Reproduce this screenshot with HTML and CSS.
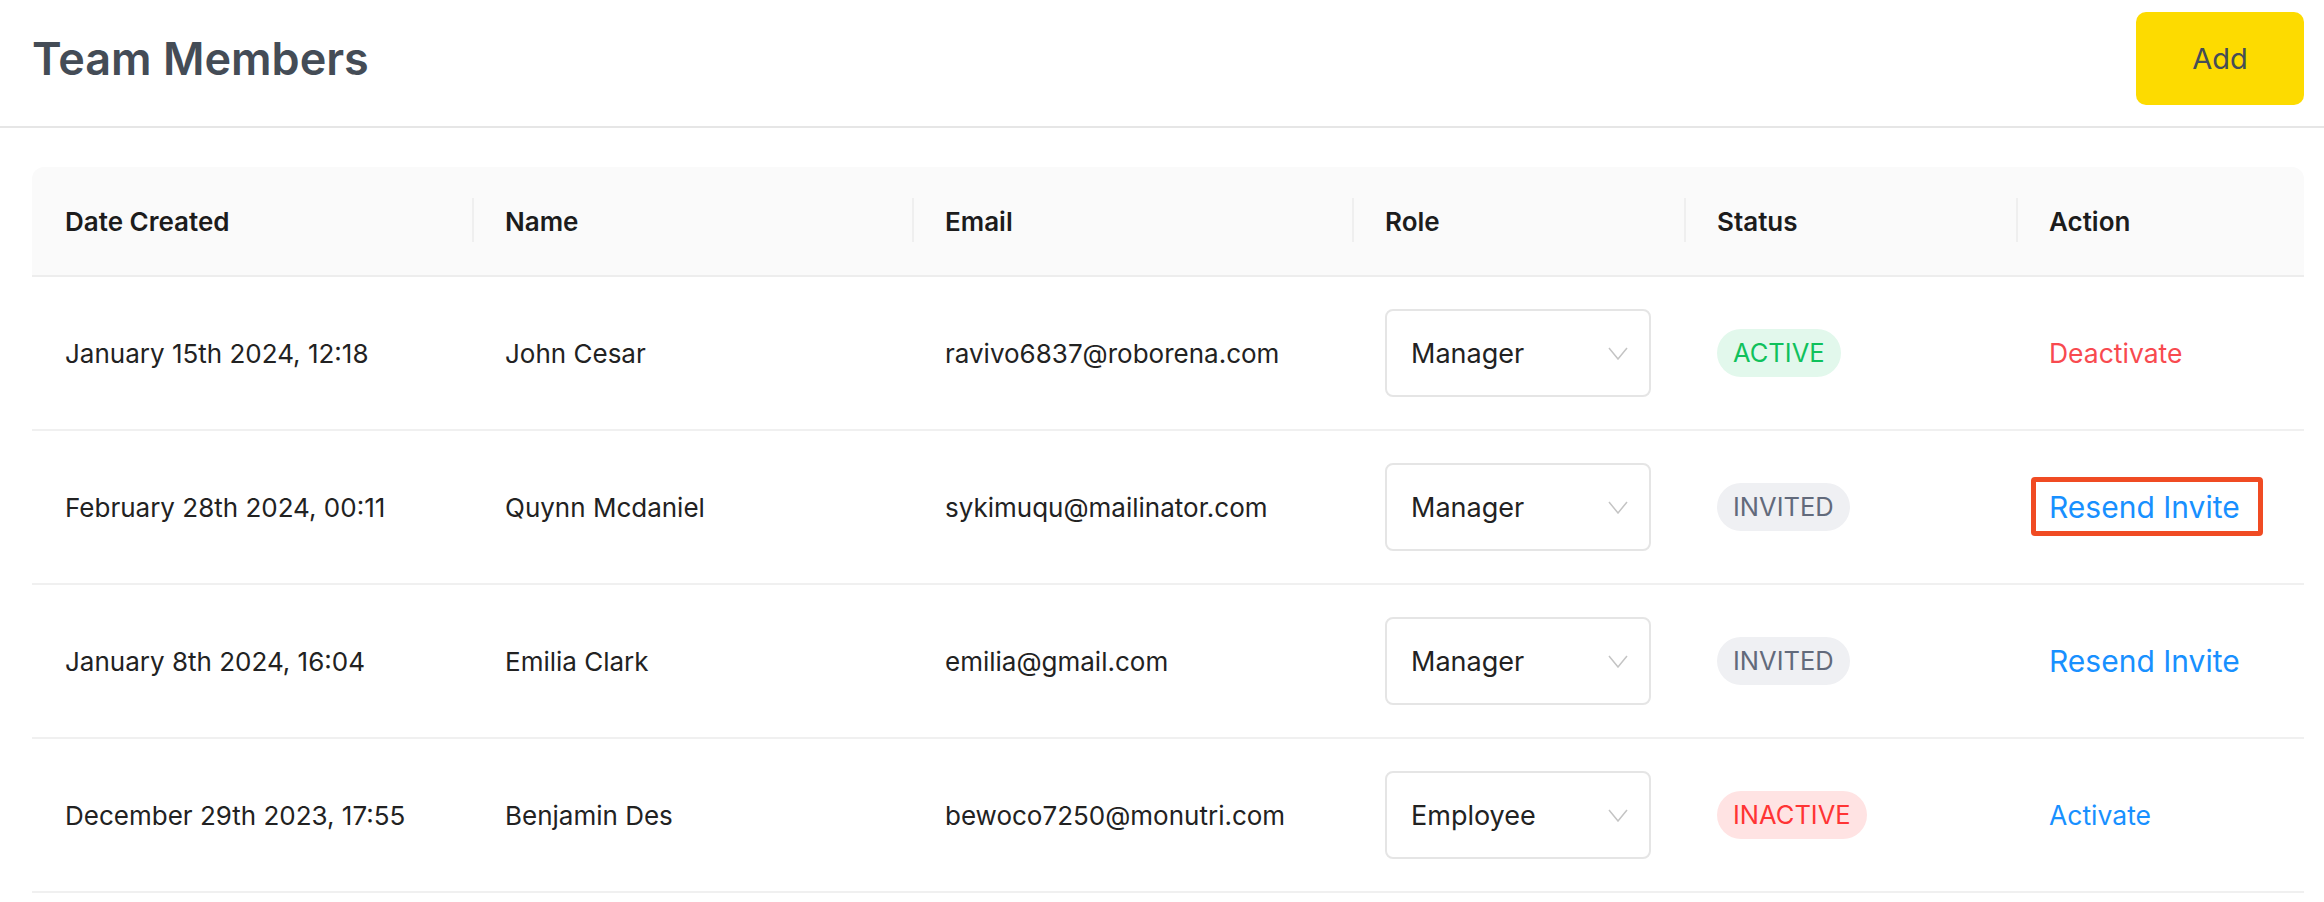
FILE: index.html
```html
<!DOCTYPE html>
<html lang="en">
<head>
    <meta charset="UTF-8">
    <meta name="viewport" content="width=device-width, initial-scale=1.0">
    <title>Team Members</title>
    <link rel="stylesheet" href="styles.css">
</head>
<body>
    <header class="topbar">
        <h1>Team Members</h1>
        <button class="add-btn">Add</button>
    </header>

    <main class="content">
        <table class="members">
            <thead>
                <tr>
                    <th class="col-date">Date Created</th>
                    <th class="col-name">Name</th>
                    <th class="col-email">Email</th>
                    <th class="col-role">Role</th>
                    <th class="col-status">Status</th>
                    <th>Action</th>
                </tr>
            </thead>
            <tbody>
                <tr>
                    <td>January 15th 2024, 12:18</td>
                    <td>John Cesar</td>
                    <td>ravivo6837@roborena.com</td>
                    <td>
                        <div class="role-select">
                            <span>Manager</span>
                            <svg width="20" height="13" viewBox="0 0 20 13"><polyline points="1,1 10,12 19,1" fill="none" stroke="#c4c4c4" stroke-width="1.5"/></svg>
                        </div>
                    </td>
                    <td><span class="badge active">ACTIVE</span></td>
                    <td><a class="action danger">Deactivate</a></td>
                </tr>
                <tr>
                    <td>February 28th 2024, 00:11</td>
                    <td>Quynn Mcdaniel</td>
                    <td>sykimuqu@mailinator.com</td>
                    <td>
                        <div class="role-select">
                            <span>Manager</span>
                            <svg width="20" height="13" viewBox="0 0 20 13"><polyline points="1,1 10,12 19,1" fill="none" stroke="#c4c4c4" stroke-width="1.5"/></svg>
                        </div>
                    </td>
                    <td><span class="badge invited">INVITED</span></td>
                    <td><a class="action resend marked">Resend Invite</a></td>
                </tr>
                <tr>
                    <td>January 8th 2024, 16:04</td>
                    <td>Emilia Clark</td>
                    <td>emilia@gmail.com</td>
                    <td>
                        <div class="role-select">
                            <span>Manager</span>
                            <svg width="20" height="13" viewBox="0 0 20 13"><polyline points="1,1 10,12 19,1" fill="none" stroke="#c4c4c4" stroke-width="1.5"/></svg>
                        </div>
                    </td>
                    <td><span class="badge invited">INVITED</span></td>
                    <td><a class="action resend">Resend Invite</a></td>
                </tr>
                <tr>
                    <td>December 29th 2023, 17:55</td>
                    <td>Benjamin Des</td>
                    <td>bewoco7250@monutri.com</td>
                    <td>
                        <div class="role-select">
                            <span>Employee</span>
                            <svg width="20" height="13" viewBox="0 0 20 13"><polyline points="1,1 10,12 19,1" fill="none" stroke="#c4c4c4" stroke-width="1.5"/></svg>
                        </div>
                    </td>
                    <td><span class="badge inactive">INACTIVE</span></td>
                    <td><a class="action">Activate</a></td>
                </tr>
            </tbody>
        </table>
    </main>
</body>
</html>
```

FILE: styles.css
```css
body {
    margin: 0;
    font-family: Inter, "Liberation Sans", sans-serif;
    color: #222;
    background: #fff;
}
.topbar {
    display: flex;
    justify-content: space-between;
    align-items: center;
    padding: 12px 20px 21px 32px;
    border-bottom: 2px solid #e6e6e6;
}
.topbar h1 {
    margin: 0;
    font-size: 45px;
    font-weight: 600;
    color: #444c56;
}
.add-btn {
    width: 168px;
    height: 93px;
    background: #fddb00;
    border: none;
    border-radius: 10px;
    font-family: inherit;
    font-size: 29px;
    color: #454d57;
    cursor: pointer;
}
.content {
    padding: 39px 20px 0 32px;
}
.members {
    width: 100%;
    border-collapse: separate;
    border-spacing: 0;
    table-layout: fixed;
}
.members th {
    position: relative;
    box-sizing: border-box;
    height: 110px;
    padding: 0 33px;
    text-align: left;
    font-size: 26px;
    font-weight: 600;
    color: #1c1c1c;
    background: #fafafa;
    border-bottom: 2px solid #ededed;
}
.members th + th::before {
    content: "";
    position: absolute;
    left: 0;
    top: 31px;
    bottom: 33px;
    width: 2px;
    background: #efefef;
}
.members th:first-child {
    border-top-left-radius: 12px;
}
.members th:last-child {
    border-top-right-radius: 12px;
}
.col-date, .col-name, .col-email {
    width: 440px;
}
.col-role, .col-status {
    width: 332px;
}
.members td {
    padding: 32px 33px;
    font-size: 26px;
    color: #222;
    border-bottom: 2px solid #f0f0f0;
    vertical-align: middle;
    white-space: nowrap;
}
.role-select {
    display: flex;
    justify-content: space-between;
    align-items: center;
    box-sizing: border-box;
    width: 266px;
    height: 88px;
    padding: 0 21px 0 24px;
    border: 2px solid #e5e5e5;
    border-radius: 8px;
    font-size: 27px;
}
.badge {
    display: inline-block;
    height: 48px;
    line-height: 48px;
    padding: 0 16px;
    border-radius: 24px;
    font-size: 25.5px;
}
.badge.active {
    background: #e2f8ec;
    color: #10c15c;
}
.badge.invited {
    background: #eff0f3;
    color: #626a7b;
}
.badge.inactive {
    background: #ffe3e3;
    color: #ff3434;
}
.action {
    display: inline-block;
    font-size: 26.5px;
    color: #1890ff;
    cursor: pointer;
}
.action.danger {
    color: #f84a4f;
}
.action.resend {
    font-size: 30px;
}
.marked {
    position: relative;
}
.marked::after {
    content: "";
    position: absolute;
    left: -18px;
    right: -23px;
    top: -12px;
    bottom: -11px;
    border: 5px solid #f04b23;
    border-radius: 4px;
}
```
